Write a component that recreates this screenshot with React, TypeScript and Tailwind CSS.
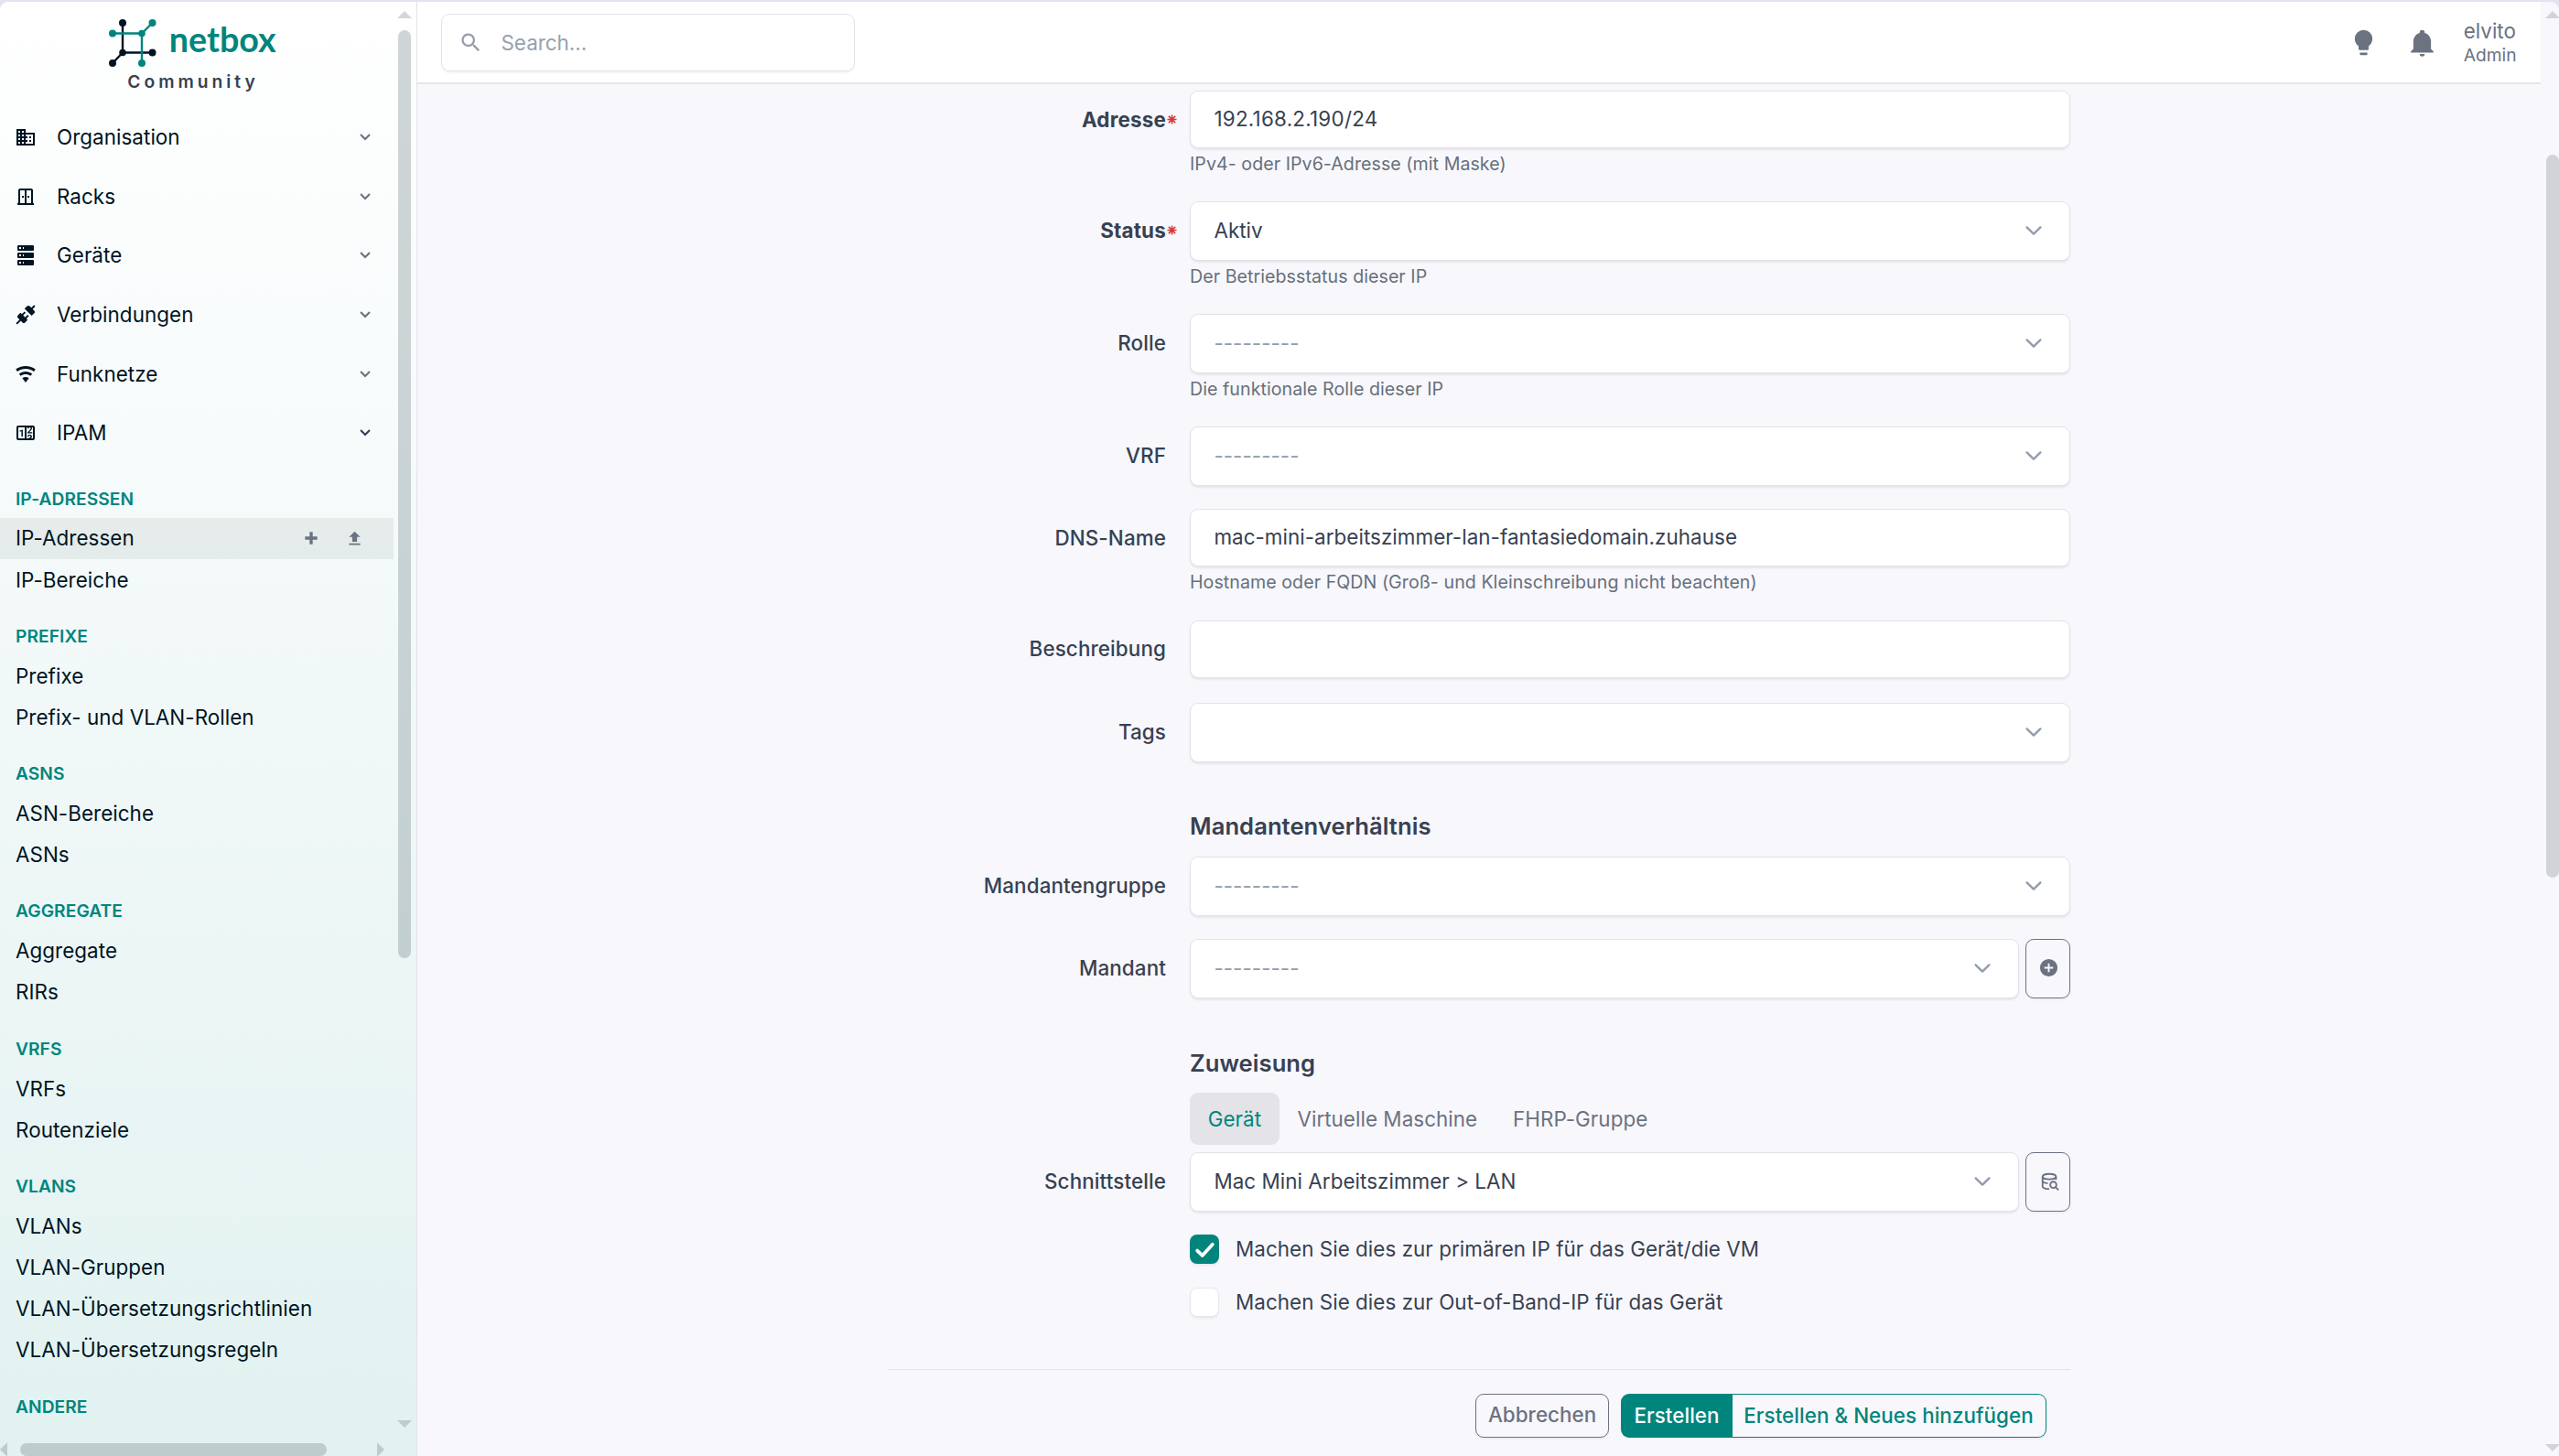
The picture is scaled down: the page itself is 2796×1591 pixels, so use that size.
import type { ReactNode } from 'react';

const PATHS = {
  domain:
    'M18,15H16V17H18M18,11H16V13H18M20,19H12V17H14V15H12V13H14V11H12V9H20M10,7H8V5H10M10,11H8V9H10M10,15H8V13H10M10,19H8V17H10M6,7H4V5H6M6,11H4V9H6M6,15H4V13H6M6,19H4V17H6M12,7V3H2V21H22V7H12Z',
  rack: 'M20 19V5C20 3.9 19.1 3 18 3H6C4.9 3 4 3.9 4 5V19H3V21H21V19H20M11 19H6V5H11V19M18 19H13V5H18V19M8 11H10V13H8V11M14 11H16V13H14V11Z',
  server:
    'M4,1H20A1,1 0 0,1 21,2V6A1,1 0 0,1 20,7H4A1,1 0 0,1 3,6V2A1,1 0 0,1 4,1M4,9H20A1,1 0 0,1 21,10V14A1,1 0 0,1 20,15H4A1,1 0 0,1 3,14V10A1,1 0 0,1 4,9M4,17H20A1,1 0 0,1 21,18V22A1,1 0 0,1 20,23H4A1,1 0 0,1 3,22V18A1,1 0 0,1 4,17M9,5H10V3H9V5M9,13H10V11H9V13M9,21H10V19H9V21M5,3V5H7V3H5M5,11V13H7V11H5M5,19V21H7V19H5Z',
  connection:
    'M21.4 7.5C22.2 8.3 22.2 9.6 21.4 10.3L18.6 13.1L10.8 5.3L13.6 2.5C14.4 1.7 15.7 1.7 16.4 2.5L18.2 4.3L21.2 1.3L22.6 2.7L19.6 5.7L21.4 7.5M15.6 13.3L14.2 11.9L11.4 14.7L9.3 12.6L12.1 9.8L10.7 8.4L7.9 11.2L6.4 9.8L3.6 12.6C2.8 13.4 2.8 14.7 3.6 15.4L5.4 17.2L1.4 21.2L2.8 22.6L6.8 18.6L8.6 20.4C9.4 21.2 10.7 21.2 11.4 20.4L14.2 17.6L12.8 16.2L15.6 13.3Z',
  wifi: 'M12,21L15.6,16.2C14.6,15.45 13.35,15 12,15C10.65,15 9.4,15.45 8.4,16.2L12,21M12,3C7.95,3 4.21,4.34 1.2,6.6L3,9C5.5,7.12 8.62,6 12,6C15.38,6 18.5,7.12 21,9L22.8,6.6C19.79,4.34 16.05,3 12,3M12,9C9.3,9 6.81,9.89 4.8,11.4L6.6,13.8C8.1,12.67 9.97,12 12,12C14.03,12 15.9,12.67 17.4,13.8L19.2,11.4C17.19,9.89 14.7,9 12,9Z',
  counter:
    'M4,4H20A2,2 0 0,1 22,6V18A2,2 0 0,1 20,20H4A2,2 0 0,1 2,18V6A2,2 0 0,1 4,4M4,6V18H11V6H4M20,18V6H18.76C19,6.54 18.95,7.07 18.95,7.13C18.88,7.8 18.41,8.5 18.24,8.75L15.91,11.3L19.23,11.28L19.24,12.5L14.04,12.47L14,11.47C14,11.47 17.05,8.24 17.2,7.95C17.34,7.67 17.91,6 16.5,6C15.27,6.05 15.41,7.3 15.41,7.3L13.87,7.31C13.87,7.31 13.88,6.65 14.25,6H13V18H15.58L15.57,17.14L16.54,17.13C16.54,17.13 17.45,16.97 17.46,16.08C17.5,15.08 16.65,15.08 16.5,15.08C16.37,15.08 15.43,15.13 15.43,15.95H13.91C13.91,15.95 13.95,13.89 16.5,13.89C19.1,13.89 18.96,15.91 18.96,15.91C18.96,15.91 19,17.16 17.85,17.63L18.37,18H20M8.92,16H7.42V10.2L5.62,10.76V9.53L8.76,8.41H8.92V16Z',
  plus: 'M20 14H14V20H10V14H4V10H10V4H14V10H20V14Z',
  upload: 'M9,16V10H5L12,3L19,10H15V16H9M5,20V18H19V20H5Z',
  magnify:
    'M9.5,3A6.5,6.5 0 0,1 16,9.5C16,11.11 15.41,12.59 14.44,13.73L14.71,14H15.5L20.5,19L19,20.5L14,15.5V14.71L13.73,14.44C12.59,15.41 11.11,16 9.5,16A6.5,6.5 0 0,1 3,9.5A6.5,6.5 0 0,1 9.5,3M9.5,5C7,5 5,7 5,9.5C5,12 7,14 9.5,14C12,14 14,12 14,9.5C14,7 12,5 9.5,5Z',
  bulb: 'M12,2A7,7 0 0,0 5,9C5,11.38 6.19,13.47 8,14.74V17A1,1 0 0,0 9,18H15A1,1 0 0,0 16,17V14.74C17.81,13.47 19,11.38 19,9A7,7 0 0,0 12,2M9,21A1,1 0 0,0 10,22H14A1,1 0 0,0 15,21V20H9V21Z',
  bell: 'M21,19V20H3V19L5,17V11C5,7.9 7.03,5.17 10,4.29C10,4.19 10,4.1 10,4A2,2 0 0,1 12,2A2,2 0 0,1 14,4C14,4.1 14,4.19 14,4.29C16.97,5.17 19,7.9 19,11V17L21,19M14,21A2,2 0 0,1 12,23A2,2 0 0,1 10,21',
  plusCircle:
    'M17,13H13V17H11V13H7V11H11V7H13V11H17M12,2A10,10 0 0,0 2,12A10,10 0 0,0 12,22A10,10 0 0,0 22,12A10,10 0 0,0 12,2Z',
};

function Icon({ name, className }: { name: keyof typeof PATHS; className: string }) {
  return (
    <svg viewBox="0 0 24 24" className={className} fill="currentColor" aria-hidden="true">
      <path d={PATHS[name]} />
    </svg>
  );
}

function DatabaseSearch() {
  return (
    <svg viewBox="0 0 24 24" className="mb-[2px] ml-1 size-[22px]" fill="none" stroke="currentColor" strokeWidth="2" aria-hidden="true">
      <ellipse cx="11" cy="6.2" rx="8" ry="3.2" />
      <path d="M3 6.2V17.6C3 19.3 6.2 20.8 11 20.9M19 6.2V10M3 11.6C3.8 13.1 6 13.9 9.2 14.2" />
      <circle cx="15.8" cy="16" r="3.7" />
      <path d="M18.4 18.6L22 22.2" />
    </svg>
  );
}

function Chevron({ className }: { className: string }) {
  return (
    <svg viewBox="0 0 20 12" className={className} fill="none" stroke="currentColor" strokeWidth="2.4" strokeLinecap="round" strokeLinejoin="round" aria-hidden="true">
      <path d="M2.6 2.4L10 9.6L17.4 2.4" />
    </svg>
  );
}

function SmallChevron({ className }: { className: string }) {
  return (
    <svg viewBox="0 0 14 10" className={className} fill="none" stroke="currentColor" strokeWidth="2.1" aria-hidden="true">
      <path d="M2 2L7 7L12 2" />
    </svg>
  );
}

function Arrow({ points, className }: { points: string; className: string }) {
  return (
    <svg viewBox="0 0 16 16" className={className} fill="currentColor" aria-hidden="true">
      <polygon points={points} />
    </svg>
  );
}

const MENU: { label: string; icon: keyof typeof PATHS; open?: boolean }[] = [
  { label: 'Organisation', icon: 'domain' },
  { label: 'Racks', icon: 'rack' },
  { label: 'Geräte', icon: 'server' },
  { label: 'Verbindungen', icon: 'connection' },
  { label: 'Funknetze', icon: 'wifi' },
  { label: 'IPAM', icon: 'counter', open: true },
];

const GROUPS: { title: string; items: string[] }[] = [
  { title: 'IP-ADRESSEN', items: ['IP-Adressen', 'IP-Bereiche'] },
  { title: 'PREFIXE', items: ['Prefixe', 'Prefix- und VLAN-Rollen'] },
  { title: 'ASNS', items: ['ASN-Bereiche', 'ASNs'] },
  { title: 'AGGREGATE', items: ['Aggregate', 'RIRs'] },
  { title: 'VRFS', items: ['VRFs', 'Routenziele'] },
  { title: 'VLANS', items: ['VLANs', 'VLAN-Gruppen', 'VLAN-Übersetzungsrichtlinien', 'VLAN-Übersetzungsregeln'] },
  { title: 'ANDERE', items: [] },
];

function Brand() {
  return (
    <div className="flex h-[115.5px] flex-col items-center pt-[18px]">
      <div className="flex h-[54px] items-start gap-[12.5px] pr-[10px]">
        <svg viewBox="118 20 54 54" className="size-[54px]" strokeWidth="2.4" aria-hidden="true">
          <g stroke="#001423" fill="#001423">
            <path d="M134 25V57.5H166.5M134 57.5L123 69" fill="none" />
            <circle cx="134" cy="25" r="2.8" />
            <circle cx="134" cy="57.5" r="2.6" />
            <circle cx="166.5" cy="57.5" r="2.8" />
            <circle cx="123" cy="69" r="2.8" />
          </g>
          <g stroke="#00857d" fill="#00857d">
            <path d="M123 36.5H155V69M155 36.5L166.5 25" fill="none" />
            <circle cx="123" cy="36.5" r="2.8" />
            <circle cx="155" cy="36.5" r="2.6" />
            <circle cx="166.5" cy="25" r="2.8" />
            <circle cx="155" cy="69" r="2.8" />
          </g>
        </svg>
        <span className="-mt-[2px] font-['Lato',sans-serif] text-[37.6px] leading-[50px] font-bold text-[#00857d]">netbox</span>
      </div>
      <div className="pt-[2px] pr-2 text-[19.2px] leading-[27px] font-semibold tracking-[4px] text-[#374151]">Community</div>
    </div>
  );
}

function Sidebar() {
  return (
    <aside className="flex w-[456px] shrink-0 flex-col border-r border-[#e1e3e9] bg-linear-to-b from-white via-[#f1f8f8] to-[#e1f2f0] text-[#001423]">
      <div className="flex min-h-0 flex-1">
        <nav className="w-[430px] overflow-hidden tracking-[0.06px]">
          <Brand />
          {MENU.map((m) => (
            <div key={m.label} className="flex h-[64.7px] items-center pr-[24.5px] pl-4 leading-8">
              <Icon name={m.icon} className="size-[24px]" />
              <span className="ml-[22px] flex-1">{m.label}</span>
              <SmallChevron className={m.open ? 'h-[10px] w-[14px] text-[#374151]' : 'h-[10px] w-[14px] text-[#6b7280]'} />
            </div>
          ))}
          {GROUPS.map((g) => (
            <section key={g.title}>
              <h3 className="h-[60.1px] pt-[25px] pl-[17px] text-[19.2px] leading-7 font-semibold text-[#00857d]">{g.title}</h3>
              {g.items.map((item) =>
                item === 'IP-Adressen' ? (
                  <div key={item} className="flex h-[45.1px] items-center bg-linear-to-b from-[#e8eceb] to-[#e3eceb] pr-[32.5px] pl-[17px]">
                    <span className="flex-1">{item}</span>
                    <Icon name="plus" className="mr-[26.5px] size-[20px] text-[#6b7280]" />
                    <Icon name="upload" className="size-[21px] text-[#6b7280]" />
                  </div>
                ) : (
                  <div key={item} className="flex h-[45.1px] items-center pl-[17px] whitespace-nowrap">
                    {item}
                  </div>
                ),
              )}
            </section>
          ))}
        </nav>
        <div className="flex w-[25px] flex-col items-center pr-px">
          <Arrow points="8,0 16,8 0,8" className="mt-[10px] h-4 w-4 text-[#d3d6db]" />
          <div className="mt-[5px] h-[1014px] w-[14px] rounded-full bg-[#5c7078]/29" />
          <Arrow points="0,0 16,0 8,8" className="mt-auto mb-[-2px] h-4 w-4 text-[#bfcccc]" />
        </div>
      </div>
      <div className="flex h-[25px] items-center pt-[11px] text-[#bfcccc]">
        <Arrow points="8,0 8,16 0,8" className="size-4" />
        <div className="ml-[6px] h-[14px] w-[335px] rounded-full bg-[#bfcccc]" />
        <Arrow points="0,0 8,8 0,16" className="ml-[55px] size-4" />
      </div>
    </aside>
  );
}

function Header() {
  return (
    <header className="flex h-[89.5px] shrink-0 items-center border-b-2 border-[#e5e6ec] bg-white pl-[26px] text-[#6b7280]">
      <div className="mt-[1.5px] flex h-[63px] w-[452px] items-center rounded-[9px] border border-[#e1e4e9] pl-[18px] shadow-[0_2px_2px_rgba(31,41,55,0.05)]">
        <Icon name="magnify" className="size-[27px] text-[#929dab]" />
        <span className="ml-[19.5px] text-[#97a1af]">Search...</span>
      </div>
      <Icon name="bulb" className="mt-[2px] ml-auto size-[33px]" />
      <Icon name="bell" className="mt-[2px] ml-[31px] size-[33px]" />
      <div className="mt-[3px] mr-[26.5px] ml-[29px] flex flex-col">
        <span className="h-[27.5px] leading-[27.5px]">elvito</span>
        <span className="h-[27.5px] text-[19.2px] leading-[27.5px]">Admin</span>
      </div>
    </header>
  );
}

interface FieldProps {
  label: string;
  rowClass: string;
  value?: string;
  valueClass?: string;
  empty?: boolean;
  required?: boolean;
  select?: boolean;
  help?: string;
  action?: ReactNode;
}

function Field({ label, rowClass, value, valueClass = '', empty, required, select, help, action }: FieldProps) {
  return (
    <div className={`grid grid-cols-[304px_962px] gap-x-[26px] ${rowClass}`}>
      <label
        className={`flex items-center justify-end whitespace-nowrap ${select ? 'h-[65px] pb-[1.5px]' : 'h-[63px]'} ${required ? 'font-bold tracking-[0.2px]' : 'font-medium tracking-[0.12px]'}`}
      >
        {label}
        {required && (
          <svg viewBox="0 0 12 12" className="mr-[-12px] ml-[1px] size-[11px]" stroke="#d63939" strokeWidth="1.7" aria-hidden="true">
            <path d="M6 .5V11.5M.5 6H11.5M2 2L10 10M10 2L2 10" />
          </svg>
        )}
      </label>
      <div>
        <div className="flex gap-[7px]">
          <div
            className={`flex min-w-0 flex-1 items-center rounded-[9px] border border-[#e0e3e8] bg-white pr-[29px] pl-[25.4px] shadow-[0_2px_2px_rgba(31,41,55,0.08)] ${select ? 'h-[65px] pb-[1.5px]' : 'h-[63px] pb-[1px]'}`}
          >
            <span className={`flex-1 ${empty ? 'text-[#929dab]' : ''} ${valueClass}`}>{empty ? '---------' : value}</span>
            {select && <Chevron className="h-[12px] w-[20px] text-[#929dab]" />}
          </div>
          {action && (
            <button type="button" className="flex h-[65px] w-[49px] items-center justify-center rounded-[9px] border border-[#6b7280] text-[#6b7280] shadow-[0_2px_2px_rgba(31,41,55,0.04)]">
              {action}
            </button>
          )}
        </div>
        {help && <p className="pt-[3px] text-[19.6px] leading-7 tracking-[0.06px] text-[#66707b]">{help}</p>}
      </div>
    </div>
  );
}

function Form() {
  return (
    <form className="ml-[514px] flex w-[1292px] flex-col pt-[7.5px] tracking-[0.05px]">
      <Field label="Adresse" required value="192.168.2.190/24" valueClass="tracking-[0.25px]" help="IPv4- oder IPv6-Adresse (mit Maske)" rowClass="h-[121px]" />
      <Field label="Status" required select value="Aktiv" help="Der Betriebsstatus dieser IP" rowClass="h-[123px]" />
      <Field label="Rolle" select empty help="Die funktionale Rolle dieser IP" rowClass="h-[123px]" />
      <Field label="VRF" select empty rowClass="h-[90px]" />
      <Field
        label="DNS-Name"
        value="mac-mini-arbeitszimmer-lan-fantasiedomain.zuhause"
        help="Hostname oder FQDN (Groß- und Kleinschreibung nicht beachten)"
        rowClass="h-[121.5px]"
      />
      <Field label="Beschreibung" value="" rowClass="h-[90.5px]" />
      <Field label="Tags" select value="" rowClass="h-[115px]" />
      <h2 className="h-[53px] pl-[330px] text-[25.6px] leading-[40px] font-semibold">Mandantenverhältnis</h2>
      <Field label="Mandantengruppe" select empty rowClass="h-[90px]" />
      <Field label="Mandant" select empty action={<Icon name="plusCircle" className="mb-[2px] ml-[2px] size-[23px]" />} rowClass="h-[116px]" />
      <h2 className="h-[52px] pl-[330px] text-[25.6px] leading-[40px] font-semibold">Zuweisung</h2>
      <div className="ml-[330px] flex h-[65px] items-start leading-[57px] text-[#6b7280]">
        <span className="rounded-[9px] bg-[#e4e3e8] px-[19.7px] text-[#00857d]">Gerät</span>
        <span className="px-[19.7px]">Virtuelle Maschine</span>
        <span className="px-[19.2px]">FHRP-Gruppe</span>
      </div>
      <Field label="Schnittstelle" select value="Mac Mini Arbeitszimmer > LAN" action={<DatabaseSearch />} rowClass="h-[90px]" />
      <div className="ml-[330px] flex h-[58px] items-start gap-[18px] leading-8">
        <span className="flex size-[32px] items-center justify-center rounded-[8px] bg-[#00857d] shadow-[0_2px_2px_rgba(31,41,55,0.08)]">
          <svg viewBox="0 0 24 24" className="size-[25px]" fill="none" stroke="#fff" strokeWidth="3.6" strokeLinecap="round" strokeLinejoin="round" aria-hidden="true">
            <path d="M4 13L9.3 18.2L20 6.5" />
          </svg>
        </span>
        <span>Machen Sie dies zur primären IP für das Gerät/die VM</span>
      </div>
      <div className="ml-[330px] flex h-[89px] items-start gap-[18px] leading-8">
        <span className="size-[32px] rounded-[8px] border border-[#e6e7ec] bg-white shadow-[0_2px_2px_rgba(31,41,55,0.06)]" />
        <span>Machen Sie dies zur Out-of-Band-IP für das Gerät</span>
      </div>
      <div className="flex justify-end border-t border-[#e2e3e9] pt-[26px] pr-[26px] font-medium">
        <button type="button" className="mr-[13px] h-[48px] rounded-[9px] border border-[#6b7280] px-[12.7px] pb-[2px] text-[#6b7280] shadow-[0_2px_2px_rgba(31,41,55,0.05)]">
          Abbrechen
        </button>
        <button type="button" className="h-[48px] w-[122px] rounded-l-[9px] bg-[#00857d] text-center text-[#f9fafb]">
          Erstellen
        </button>
        <button type="button" className="h-[48px] w-[343px] rounded-r-[9px] border border-l-0 border-[#00857d] pr-px text-center text-[#00857d] shadow-[0_2px_2px_rgba(31,41,55,0.05)]">
          Erstellen &amp; Neues hinzufügen
        </button>
      </div>
    </form>
  );
}

export default function App() {
  return (
    <div className="flex h-[1591px] w-full flex-col overflow-hidden bg-[#e5e3f2] pt-[2px] font-['Inter',sans-serif] text-[22.4px] text-[#374151] antialiased">
      <div className="flex min-h-0 flex-1 overflow-hidden rounded-t-[9px] bg-[#f8f7fc]">
        <Sidebar />
        <main className="flex min-w-0 flex-1 flex-col">
          <Header />
          <Form />
        </main>
        <div className="flex w-[20px] shrink-0 flex-col items-end text-[#d0d4d8]">
          <Arrow points="8,0 16,8 0,8" className="mt-[10px] -mr-px size-4" />
          <div className="mt-[141px] h-[790px] w-[14px] rounded-full bg-[#d0d4d8]" />
          <Arrow points="0,0 16,0 8,8" className="mt-auto -mr-px mb-[-3px] size-4" />
        </div>
      </div>
    </div>
  );
}
